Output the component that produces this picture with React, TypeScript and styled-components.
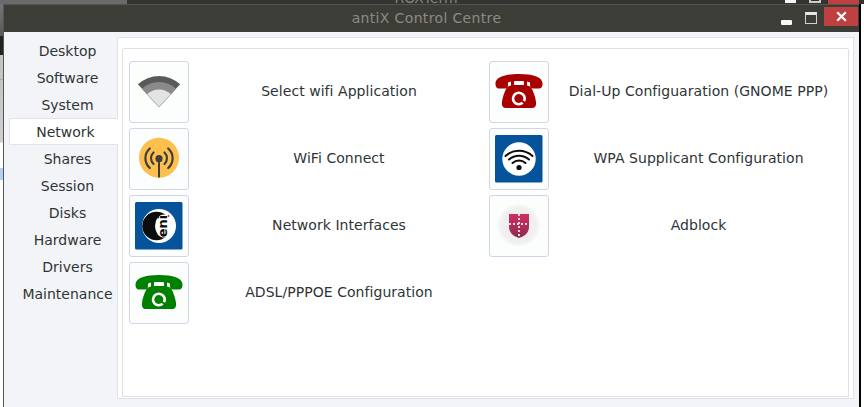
import React from "react";
import styled, { createGlobalStyle } from "styled-components";

const Global = createGlobalStyle`
  html, body { margin: 0; padding: 0; width: 864px; height: 407px; overflow: hidden; background: #fff; }
  #root { width: 864px; height: 407px; }
`;

const Desktop = styled.div`
  position: relative;
  width: 864px;
  height: 407px;
  overflow: hidden;
  background: #fff;
  font-family: "DejaVu Sans", sans-serif;
`;

const BackLeft = styled.div`
  position: absolute;
  left: 0;
  top: 0;
  width: 3px;
  height: 407px;
  background: linear-gradient(to bottom, #777 0, #5a5a5a 36px, #222 36px, #222 55px, #c4c4c4 55px, #c4c4c4 79px, #999 79px, #c4c4c4 80px, #cfcfcf 142px, #fff 143px, #fff 168px, #b4d0f2 168px, #b4d0f2 180px, #fff 180px);
`;

const BackTop = styled.div`
  position: absolute;
  left: 0;
  right: 0;
  top: 0;
  height: 4px;
  overflow: hidden;
  background: linear-gradient(to right, #6a6a6a 0, #6a6a6a 127px, #333331 127px);
`;

const BackTitle = styled.div`
  position: absolute;
  left: 0;
  width: 852px;
  top: -10px;
  text-align: center;
  color: #85857d;
  font-size: 14px;
  line-height: 17px;
`;

const BackButton = styled.div<{ $left: number; $width: number; $red?: boolean; $hollow?: boolean }>`
  position: absolute;
  top: 0;
  height: 3px;
  left: ${(p) => p.$left}px;
  width: ${(p) => p.$width}px;
  box-sizing: border-box;
  background: ${(p) => (p.$red ? "#bf4040" : p.$hollow ? "transparent" : "#f4f4f4")};
  ${(p) => p.$red && "height: 4px;"}
  ${(p) => p.$hollow && "border: 2px solid #ccc; border-top: 0;"}
`;

const Window = styled.div`
  position: absolute;
  left: 3px;
  top: 4px;
  width: 858px;
  height: 403px;
  box-sizing: border-box;
  border-left: 1px solid #555;
  border-right: 2px solid #000;
  display: flex;
  flex-direction: column;
  background: #f3f4f7;
`;

const TitleBar = styled.div`
  flex: none;
  height: 28px;
  box-sizing: border-box;
  display: flex;
  align-items: flex-start;
  background: #3d3d37;
  border-top: 1px solid #55554e;
`;

const Title = styled.div`
  flex: 1;
  padding-left: 68px;
  text-align: center;
  color: #8b8b83;
  font-size: 14px;
  letter-spacing: 0.35px;
  line-height: 26px;
`;

const MinButton = styled.div`
  width: 11px;
  height: 5px;
  margin: 15px 13px 0 0;
  background: #f6f6f6;
  border-radius: 1px;
`;

const MaxButton = styled.div`
  width: 12px;
  height: 12px;
  margin: 7px 7px 0 0;
  box-sizing: border-box;
  border: 1px solid #cfcfcb;
  border-top: 3px solid #e6e6e3;
`;

const CloseButton = styled.div`
  width: 34px;
  height: 19px;
  margin: 2px 1px 0 0;
  background: #bf4040;
  display: flex;
  align-items: center;
  justify-content: center;
`;

const Body = styled.div`
  flex: 1;
  min-height: 0;
  display: flex;
  padding: 5px 5px 8px 0;
`;

const Sidebar = styled.div`
  flex: none;
  width: 113px;
  display: flex;
  flex-direction: column;
`;

const Tab = styled.div<{ $active?: boolean }>`
  position: relative;
  z-index: ${(p) => (p.$active ? 1 : 0)};
  height: 27px;
  box-sizing: border-box;
  line-height: ${(p) => (p.$active ? 27 : 29)}px;
  font-size: 14px;
  color: #2e3436;
  text-align: center;
  margin-left: ${(p) => (p.$active ? 5 : 0)}px;
  margin-right: ${(p) => (p.$active ? -1 : 0)}px;
  padding-left: ${(p) => (p.$active ? 3 : 14)}px;
  white-space: nowrap;
  background: ${(p) => (p.$active ? "#fff" : "transparent")};
  border: ${(p) => (p.$active ? "1px solid #e0e3ea" : "0")};
  ${(p) => p.$active && "border-right: 0;"}
`;

const Pane = styled.div`
  flex: 1;
  min-width: 0;
  box-sizing: border-box;
  border: 1px solid #e0e3ea;
  background: #fff;
  padding: 10px 4px 1px;
  display: flex;
`;

const Panel = styled.div`
  flex: 1;
  min-width: 0;
  box-sizing: border-box;
  border: 1px solid #dfe0e3;
  border-radius: 2px 2px 0 0;
  padding: 12px 0 0 6px;
  display: grid;
  grid-template-columns: 360px 1fr;
  grid-template-rows: repeat(4, 62px);
  grid-auto-flow: column;
  row-gap: 5px;
  align-content: start;
`;

const Row = styled.div`
  display: flex;
  align-items: center;
  min-width: 0;
`;

const IconButton = styled.div`
  flex: none;
  width: 60px;
  height: 62px;
  box-sizing: border-box;
  border: 1px solid #d0d6e6;
  border-radius: 3px;
  background: #fcfdfd;
  display: flex;
  align-items: center;
  justify-content: center;
`;

const Label = styled.div`
  flex: 1;
  text-align: center;
  font-size: 14px;
  letter-spacing: 0.05px;
  line-height: 17px;
  padding-bottom: 1px;
  color: #2e3436;
  white-space: nowrap;
`;

const Icon = styled.svg`
  display: block;
  width: 48px;
  height: 48px;
  flex: none;
`;

const sector = (r: number) => {
  const s = 0.682 * r;
  const c = 0.731 * r;
  return `M24 39 L${24 - s} ${39 - c} A${r} ${r} 0 0 1 ${24 + s} ${39 - c} Z`;
};

const WifiFan = () => (
  <Icon viewBox="0 0 48 48">
    <path d={sector(31)} fill="#5a5a5a" />
    <path d={sector(25)} fill="#8a8a8a" />
    <path d={sector(17.5)} fill="#e3e3e3" />
    <path d="M12.1 26.2 L24 39 L35.9 26.2" fill="none" stroke="#a8a8a8" strokeWidth="0.7" />
  </Icon>
);

const Antenna = () => (
  <Icon viewBox="0 0 48 48">
    <circle cx="24" cy="22.7" r="20" fill="#fdc04e" />
    <g fill="none" stroke="#3f3d38" strokeWidth="2.2" strokeLinecap="round">
      <path d="M18.5 17.5 A8 8 0 0 0 18.5 29" />
      <path d="M29.5 17.5 A8 8 0 0 1 29.5 29" />
      <path d="M14.8 13.5 A13 13 0 0 0 14.8 33" />
      <path d="M33.2 13.5 A13 13 0 0 1 33.2 33" />
    </g>
    <circle cx="24" cy="23.7" r="3.6" fill="#3f3d38" />
    <rect x="23" y="24" width="2" height="18.5" fill="#3f3d38" />
  </Icon>
);

const Eni = () => (
  <Icon viewBox="0 0 48 48">
    <rect x="0" y="0" width="47.5" height="47.5" rx="1.5" fill="#04539b" />
    <circle cx="24" cy="24" r="17" fill="#fff" />
    <circle cx="21.5" cy="24" r="14.3" fill="#0c0c0c" />
    <ellipse cx="29" cy="24" rx="9" ry="11.5" fill="#fff" />
    <text
      x="0"
      y="0"
      transform="translate(32 24) rotate(-90)"
      textAnchor="middle"
      fontFamily="DejaVu Sans, sans-serif"
      fontWeight="700"
      fontSize="13"
      fill="#0c0c0c"
    >
      eni
    </text>
    <circle cx="33.5" cy="14" r="1" fill="#d8262c" />
  </Icon>
);

const Phone = ({ color }: { color: string }) => (
  <Icon viewBox="0 0 48 48">
    <g fill={color}>
      <path d="M0.5 15 C1 9 10 6 24 6 C38 6 47 9 47.5 15 C47.8 18.5 46.5 20.5 44 20.5 L38 20.5 C36 20.5 35 19 35 17 L35 14.5 C30 12.5 18 12.5 13 14.5 L13 17 C13 19 12 20.5 10 20.5 L4 20.5 C1.5 20.5 0.3 18.5 0.5 15Z" />
      <path d="M16 12 L19 12 L19 17 L29 17 L29 12 L32 12 L32 17.5 C35 18 36 19 37 21 C39 25 40.5 30 41 34 C41.5 38 40 40 37 40 L11 40 C8 40 6.5 38 7 34 C7.5 30 9 25 11 21 C12 19 13 18 16 17.5Z" />
    </g>
    <circle
      cx="23.8"
      cy="30.5"
      r="5.8"
      fill="none"
      stroke="#fff"
      strokeWidth="2.6"
      strokeDasharray="33.4 3"
      transform="rotate(48 23.8 30.5)"
    />
  </Icon>
);

const WifiBadge = () => (
  <Icon viewBox="0 0 48 48">
    <rect x="0" y="0" width="47.5" height="47.5" rx="1.5" fill="#04539b" />
    <circle cx="24" cy="24" r="16.7" fill="#fff" />
    <g fill="none" stroke="#0c0c0c" strokeWidth="2" strokeLinecap="round">
      <path d="M10.5 21 A20 20 0 0 1 37.5 21" />
      <path d="M14 24.5 A15 15 0 0 1 34 24.5" />
      <path d="M17.5 28 A10 10 0 0 1 30.5 28" />
    </g>
    <circle cx="24" cy="32.5" r="2.6" fill="#0c0c0c" />
  </Icon>
);

const Shield = () => (
  <Icon viewBox="0 0 48 48">
    <defs>
      <linearGradient id="shieldFill" x1="0" y1="0" x2="0" y2="1">
        <stop offset="0" stopColor="#cf2f60" />
        <stop offset="1" stopColor="#8f2b50" />
      </linearGradient>
      <radialGradient id="shieldDisc">
        <stop offset="0" stopColor="#ececec" />
        <stop offset="0.8" stopColor="#f0f0f0" />
        <stop offset="1" stopColor="#f8f8f8" />
      </radialGradient>
    </defs>
    <circle cx="23.7" cy="23.3" r="21" fill="url(#shieldDisc)" />
    <path d="M14 12 L34 12 L34 25 C34 31 29 34.5 24 36 C19 34.5 14 31 14 25 Z" fill="url(#shieldFill)" />
    <path d="M24 12 V35" stroke="#f4d6df" strokeWidth="2" strokeDasharray="2 2" />
    <path d="M14 22 H34" stroke="#f4d6df" strokeWidth="2" strokeDasharray="2 2" />
  </Icon>
);

const tabs = ["Desktop", "Software", "System", "Network", "Shares", "Session", "Disks", "Hardware", "Drivers", "Maintenance"];

const items: { label: string; icon: React.ReactNode }[] = [
  { label: "Select wifi Application", icon: <WifiFan /> },
  { label: "WiFi Connect", icon: <Antenna /> },
  { label: "Network Interfaces", icon: <Eni /> },
  { label: "ADSL/PPPOE Configuration", icon: <Phone color="#008000" /> },
  { label: "Dial-Up Configuaration (GNOME PPP)", icon: <Phone color="#a90000" /> },
  { label: "WPA Supplicant Configuration", icon: <WifiBadge /> },
  { label: "Adblock", icon: <Shield /> },
];

export default function App() {
  return (
    <Desktop>
      <Global />
      <BackLeft />
      <BackTop>
        <BackTitle>ROXTerm</BackTitle>
        <BackButton $left={785} $width={11} />
        <BackButton $left={809} $width={12} $hollow />
        <BackButton $left={828} $width={31} $red />
      </BackTop>
      <Window>
        <TitleBar>
          <Title>antiX Control Centre</Title>
          <MinButton />
          <MaxButton />
          <CloseButton>
            <svg width="11" height="11" viewBox="0 0 11 11">
              <path d="M1.2 1.2 L9.8 9.8 M9.8 1.2 L1.2 9.8" stroke="#fff" strokeWidth="2.2" />
            </svg>
          </CloseButton>
        </TitleBar>
        <Body>
          <Sidebar>
            {tabs.map((t) => (
              <Tab key={t} $active={t === "Network"}>
                {t}
              </Tab>
            ))}
          </Sidebar>
          <Pane>
            <Panel>
              {items.map((it) => (
                <Row key={it.label}>
                  <IconButton>{it.icon}</IconButton>
                  <Label>{it.label}</Label>
                </Row>
              ))}
            </Panel>
          </Pane>
        </Body>
      </Window>
    </Desktop>
  );
}
